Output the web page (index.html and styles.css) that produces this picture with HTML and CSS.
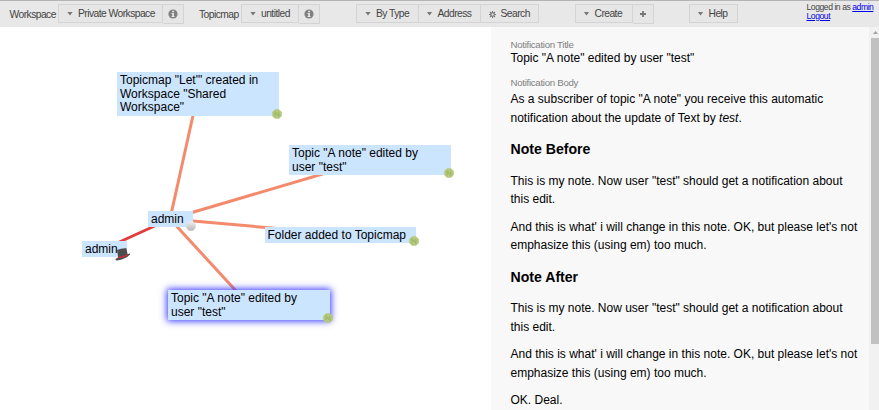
FILE: index.html
```html
<!DOCTYPE html>
<html lang="en">
<head>
<meta charset="utf-8">
<title>Topicmap</title>
<link rel="stylesheet" href="styles.css">
</head>
<body>
<svg width="0" height="0" class="defs">
  <defs>
    <linearGradient id="silver" x1="0" y1="0" x2="0" y2="1"><stop offset="0" stop-color="#efefef"/><stop offset="1" stop-color="#b8b8b8"/></linearGradient>
    <symbol id="info" viewBox="0 0 10 10"><circle cx="5" cy="5" r="4.6" fill="#808080"/><path d="M4.2 1.8h1.7v1.5H4.2zM3.6 4h2.3v3h.7v1.1H3.5V7h.8V5h-.7z" fill="#e8e8e8"/></symbol>
    <symbol id="note" viewBox="0 0 10 10"><path d="M3.2.2h3.6L9.8 3v4L7 9.8H3L.2 7V3z" fill="#b4c97f"/><path d="M3 7.2V3.2L6.8 7V3" stroke="#9dba66" stroke-width="1.2" fill="none"/></symbol>
  </defs>
</svg>
<header class="toolbar">
  <span class="label workspace">Workspace</span>
  <div class="group">
    <div class="button w104"><i class="caret"></i>Private Workspace</div>
    <div class="button small"><svg class="info"><use href="#info"/></svg></div>
  </div>
  <span class="label topicmap">Topicmap</span>
  <div class="group">
    <div class="button w58"><i class="caret"></i>untitled</div>
    <div class="button small"><svg class="info"><use href="#info"/></svg></div>
  </div>
  <div class="group search">
    <div class="button w62"><i class="caret"></i>By Type</div>
    <div class="button w62"><i class="caret"></i>Address</div>
    <div class="button w58"><svg class="gear" viewBox="0 0 8 8"><circle cx="4" cy="4" r="2.1" fill="none" stroke="#777" stroke-width="1.5"/><path d="M4 0v1.5M4 6.5V8M0 4h1.5M6.5 4H8M1.1 1.1l1.1 1.1M5.8 5.8l1.1 1.1M1.1 6.9l1.1-1.1M5.8 2.2l1.1-1.1" stroke="#777" stroke-width="1.2"/></svg>Search</div>
  </div>
  <div class="group create">
    <div class="button w58"><i class="caret"></i>Create</div>
    <div class="button small"><svg class="plus" viewBox="0 0 6 6"><path d="M3 0v6M0 3h6" stroke="#777" stroke-width="1.8"/></svg></div>
  </div>
  <div class="group help"><div class="button w49"><i class="caret"></i>Help</div></div>
  <div class="login"><div>Logged in as <a href="#">admin</a></div><div><a href="#">Logout</a></div></div>
</header>
<main class="content">
  <section class="canvas">
    <svg class="edges" viewBox="0 27 491 383" width="491" height="383">
      <g stroke="#f38a6c" stroke-width="3">
        <path d="M170 219L198 93"/><path d="M170 219L370 160"/><path d="M170 219L340 234"/><path d="M170 219L249 305"/>
      </g>
      <path d="M170 219L104 249" stroke="#e43c3c" stroke-width="3"/>
    </svg>
    <div class="topic t1">Topicmap "Let'" created in<br>Workspace "Shared<br>Workspace"<svg class="badge"><use href="#note"/></svg></div>
    <div class="topic t2">Topic "A note" edited by<br>user "test"<svg class="badge"><use href="#note"/></svg></div>
    <div class="topic t3">Folder added to Topicmap<svg class="badge"><use href="#note"/></svg></div>
    <div class="topic t4">admin<svg class="badge ball" viewBox="0 0 10 10"><path d="M3.2.3h3.6L9.7 3v4L7 9.7H3L.3 7V3z" fill="url(#silver)"/></svg></div>
    <div class="topic t5">admin<svg class="hat" viewBox="0 0 16 13"><path d="M2 1.9Q6 .1 11.4.3l1.2 6 1.8-.9q1 .1.6 1Q11 11 1.6 12.6q-1.4-.3-1-1.5l2.6-1.8z" fill="#4d4d4d"/><path d="M3.1 8.6q4.4.7 9.3-2.3l.2 1.3q-4.8 2.9-9 2.3z" fill="#e32636"/></svg></div>
    <div class="topic t6">Topic "A note" edited by<br>user "test"<svg class="badge"><use href="#note"/></svg></div>
  </section>
  <section class="detail">
    <div class="field">Notification Title</div>
    <div class="title">Topic "A note" edited by user "test"</div>
    <div class="field">Notification Body</div>
    <div class="body">
      <p>As a subscriber of topic "A note" you receive this automatic<br>notification about the update of Text by <em>test</em>.</p>
      <h3>Note Before</h3>
      <p>This is my note. Now user "test" should get a notification about<br>this edit.</p>
      <p>And this is what' i will change in this note. OK, but please let's not<br>emphasize this (using em) too much.</p>
      <h3>Note After</h3>
      <p>This is my note. Now user "test" should get a notification about<br>this edit.</p>
      <p>And this is what' i will change in this note. OK, but please let's not<br>emphasize this (using em) too much.</p>
      <p>OK. Deal.</p>
    </div>
  </section>
  <div class="scrollbar"><i class="up"></i><div class="thumb"></div></div>
</main>
</body>
</html>
```

FILE: styles.css
```css
* { box-sizing: border-box; }
body { margin: 0; width: 879px; height: 410px; overflow: hidden; background: #fff; font-family: "Liberation Sans", Arial, sans-serif; color: #000; }
svg { display: block; }
.defs { position: absolute; }
.toolbar { display: flex; align-items: flex-start; height: 27px; padding-top: 3px; border-top: 1px solid #b4b4b4; background: #e8e8e8; font-size: 10.3px; letter-spacing: -0.55px; color: #444; white-space: nowrap; }
.label { line-height: 21px; flex: none; }
.workspace { width: 48.5px; margin-left: 9.5px; }
.topicmap { width: 42px; margin-left: 15.5px; }
.group { display: flex; flex: none; }
.button { display: flex; align-items: center; height: 19px; padding-left: 8px; border: 1px solid #d4d4d4; background: #e6e6e6; flex: none; }
.button + .button { border-left: 0; }
.small { width: 21px; height: 20px; padding: 0; justify-content: center; }
.w104 { width: 104.5px; }
.w62 { width: 62.5px; }
.w58 { width: 58px; }
.w49 { width: 49px; }
.search { margin-left: 36px; }
.create { margin-left: 35.5px; }
.help { margin-left: 35px; }
.caret { width: 6px; height: 4px; margin-right: 5px; background: #777; clip-path: polygon(0 0, 100% 0, 50% 100%); }
.info { width: 10px; height: 10px; }
.gear { width: 7px; height: 7px; margin: 1px 4.5px 0 0; }
.plus { width: 6px; height: 6px; }
.login { margin: -1px 0 0 69px; font-size: 8.6px; letter-spacing: -0.45px; line-height: 8.5px; }
.login a { color: #00e; }
.content { display: flex; height: 383px; }
.canvas { position: relative; width: 491px; flex: none; }
.topic { position: absolute; padding: 2px 3px 0; background: #cce5ff; font-size: 12px; line-height: 13.6px; white-space: nowrap; }
.t1 { left: 117px; top: 45px; width: 162px; height: 44px; }
.t2 { left: 289px; top: 118px; width: 162px; height: 30px; }
.t3 { left: 264.5px; top: 200px; width: 151px; height: 16px; }
.t4 { left: 148px; top: 184px; width: 45px; height: 16px; }
.t5 { left: 82px; top: 214px; width: 45px; height: 16px; }
.t6 { left: 168px; top: 263px; width: 162px; height: 30px; box-shadow: 0 0 7px 1px #3333ff; }
.badge { position: absolute; width: 10px; height: 10px; right: -3px; bottom: -3px; }
.ball { bottom: -4px; }
.hat { position: absolute; width: 16px; height: 13px; right: -4px; bottom: -4px; }
.detail { width: 378px; flex: none; padding: 12px 0 0 19.5px; background: #f8f8f8; overflow: hidden; white-space: nowrap; font-size: 12px; }
.field { font-size: 9.7px; letter-spacing: -0.3px; line-height: 11px; color: #808080; }
.title { line-height: 16px; margin-bottom: 11px; }
.body { line-height: 18.7px; padding-top: 2px; }
.body p { margin: 0 0 8.7px; }
.body h3 { margin: 11.5px 0 12.6px; font-size: 14.1px; line-height: 20px; }
.scrollbar { width: 10px; flex: none; background: #f1f1f1; padding: 4px 0 0 2px; }
.up { display: block; width: 5px; height: 3px; margin: 0 0 4px 2px; background: #a3a3a3; clip-path: polygon(50% 0, 100% 100%, 0 100%); }
.thumb { width: 8px; height: 306px; background: #c1c1c1; }
```
